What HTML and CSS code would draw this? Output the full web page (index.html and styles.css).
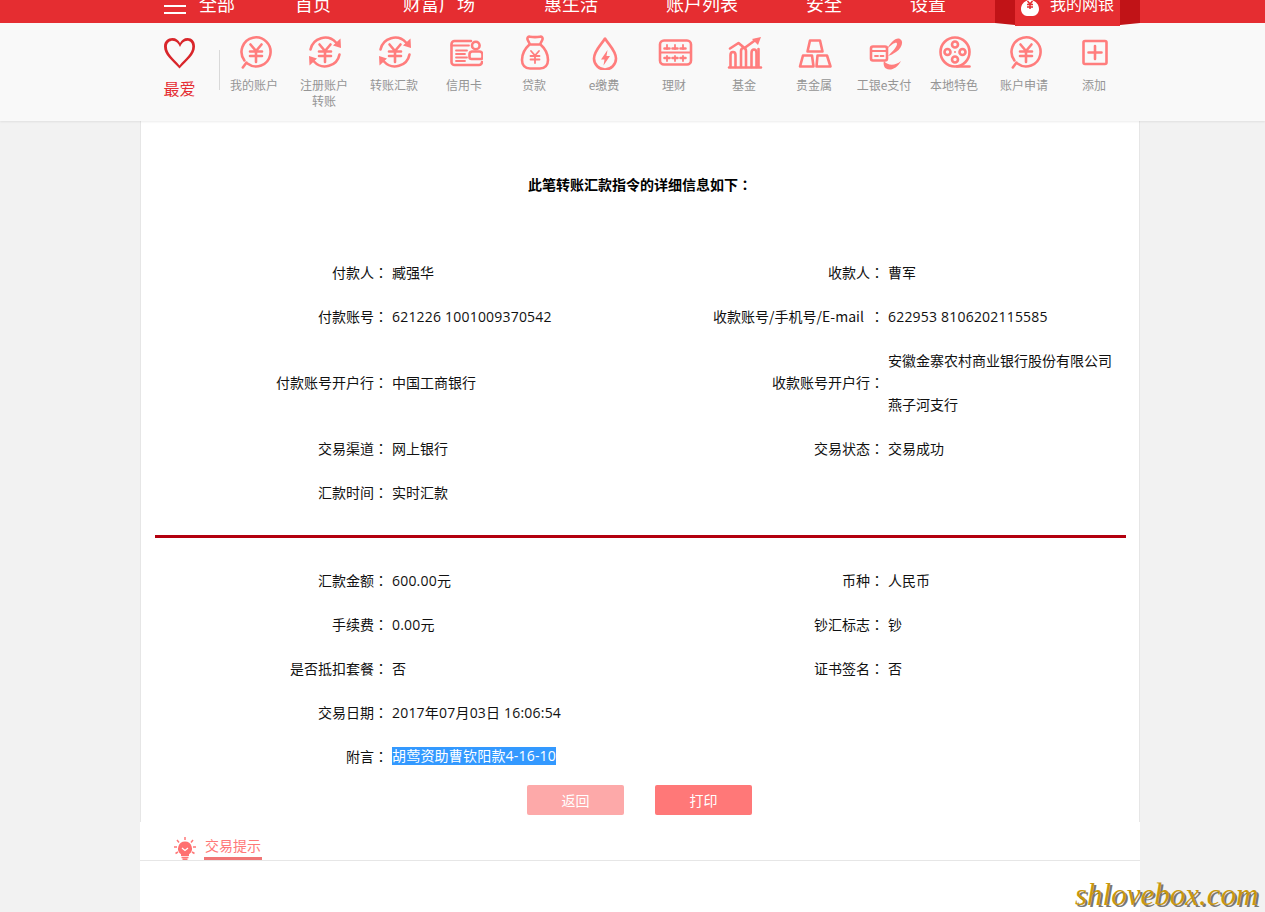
FILE: index.html
```html
<!DOCTYPE html>
<html lang="zh-CN">
<head>
<meta charset="utf-8">
<title>转账汇款详细信息</title>
<link rel="stylesheet" href="styles.css">
</head>
<body>
<svg class="defs" width="0" height="0" aria-hidden="true">
  <symbol id="i-account" viewBox="0 0 36 36"><path d="M10.400 29.500A14.500 14.500 0 1 0 7.400 26.500M9.500 28.500L5.800 33.500"/><path d="M13.500 10.500L19 17l5.500-6.500M13 17.500h12M13 22h12M19 17v11"/></symbol>
  <symbol id="i-transfer" viewBox="0 0 36 36"><path d="M3.500 15.500A14.800 14.800 0 0 1 29 8.500M32.500 20.500A14.800 14.800 0 0 1 7 27.500"/><path class="solid" d="M26 11.500L33.500 4.500l.5 9.500zM10 24.500L2.500 31.500L2 22z"/><path d="M12.500 10.500L18 17l5.500-6.500M12 17.500h12M12 22h12M18 17v11"/></symbol>
  <symbol id="i-card" viewBox="0 0 36 36"><path d="M24 7H7.500a3 3 0 0 0-3 3v18a3 3 0 0 0 3 3H32a3 3 0 0 0 3-3"/><path class="thin" d="M4.500 11.500H22M9 16.500h11M9 20h9M9 23.500h11M9 27h9"/><circle cx="28.800" cy="11.500" r="3.800"/><path d="M25 17.500h7.500a3 3 0 0 1 3 3v2.500a2 2 0 0 1-2 2h-9a2 2 0 0 1-2-2v-2.500a3 3 0 0 1 2.500-3z"/></symbol>
  <symbol id="i-bag" viewBox="0 0 36 36"><path d="M13 10.500L10.500 5.500C10 3.500 11 2.500 13 2.700c3.500.6 6.500.6 10 0 2-.2 3 .8 2.500 2.800L23 10.500M12.500 10.500h11M12.500 10.500C8 14.500 5 20 5 26c0 5 3 8.500 8 8.500h10c5 0 8-3.500 8-8.500 0-6-3-11.500-7.500-15.500"/><path class="thin" d="M14 17l4 4.500 4-4.500M13.500 22h9M13.500 25.500h9M18 21.500v7.500"/></symbol>
  <symbol id="i-drop" viewBox="0 0 36 36"><path d="M18 4.500C14 11 7 17 7 24.500a11 11 0 0 0 22 0C29 17 22 11 18 4.500z"/><path class="solid" d="M20.500 16l-6.500 9.500h3.500l-1 6 6.500-9.500h-3.500z"/></symbol>
  <symbol id="i-abacus" viewBox="0 0 36 36"><rect x="3" y="6.500" width="31" height="24" rx="4"/><path class="thin" d="M3 18.500h31M10 11v4M18 11v4M26 11v4M10 22v5M18 22v5M26 22v5"/><path d="M7.500 14.500h5M15.500 14.500h5M23.500 14.500h5M7.500 24h5M15.500 24h5M23.500 24h5"/></symbol>
  <symbol id="i-fund" viewBox="0 0 36 36"><path d="M3.500 33V21c0-2 1-3 2.500-3s2.500 1 2.500 3v12M14 33V17c0-2 1-3 2.500-3s2.500 1 2.500 3v16M24.500 33V19c0-2.500 1-3.500 2.500-3.500s2.500 1 2.500 3.500v14"/><path d="M2 33.500h32M31.500 33V15M3 14.500L11.500 9l6 5 11-8"/><path class="solid" d="M25 5l9-2-3 8z"/></symbol>
  <symbol id="i-gold" viewBox="0 0 36 36"><path d="M13 6.500h10l2.500 11h-15zM6 21.500h9l1.500 11H3zM20.500 21.500h9.500l3.500 11H19.500z"/></symbol>
  <symbol id="i-epay" viewBox="0 0 36 36"><rect x="4" y="12.500" width="16" height="14" rx="2"/><path class="thin" d="M4 17h16M8 22h3M13.500 22h3"/><path class="solid" d="M20 15C24 8 29 3 33 5c4 2 2 9-4 13-3 2-5 3-8 4 4-4 9-9 9-12 0-2.500-4-1-10 5zM17 27c4 5 11 5 17 0-4 8-11 10-15 7.500-2-1.500-3-4.500-2-7.500z"/></symbol>
  <symbol id="i-reel" viewBox="0 0 36 36"><circle cx="18" cy="18" r="14.500"/><circle cx="18" cy="10.500" r="3"/><circle cx="18" cy="25.500" r="3"/><circle cx="10.500" cy="18" r="3"/><circle cx="25.500" cy="18" r="3"/><circle class="solid" cx="18" cy="18" r="1"/><path d="M20 32.500h12.500"/></symbol>
  <symbol id="i-add" viewBox="0 0 36 36"><rect x="6.500" y="7" width="23" height="23" rx="1.500"/><path d="M18 12v13M11.500 18.500h13"/></symbol>
</svg>

<header class="topbar">
  <nav class="nav">
    <span class="burger"><i></i><i></i></span>
    <a class="nav-item nav-all">全部</a>
    <a class="nav-item nav-home">首页</a>
    <a class="nav-item nav-wealth">财富广场</a>
    <a class="nav-item nav-life">惠生活</a>
    <a class="nav-item">账户列表</a>
    <a class="nav-item">安全</a>
    <a class="nav-item">设置</a>
    <div class="mybank">
      <svg class="bag" viewBox="0 0 20 20"><path d="M7 0h6l-1 4c4 1.500 7 4.500 7 9 0 4-3 7-6 7H7c-3 0-6-3-6-7 0-4.500 3-7.500 7-9z"/><path class="bag-yen" d="M7.500 5l2.500 3 2.500-3M7 8.500h6M7 11h6M10 8v5"/></svg>
      <span>我的网银</span>
    </div>
  </nav>
</header>

<section class="iconbar">
  <div class="fav">
    <svg class="heart" viewBox="0 0 32 31"><path fill-rule="evenodd" d="M15.500 30.500C8 22 0 17 0 8.500 0 3 4 0 8.500 0 12 0 14.500 2 16 5c1.500-3 4-5 7.500-5C28 0 31 3 31 8.500c0 8.500-8 13.500-15.500 22zM15.500 27.500c6-7.500 12.800-11.500 12.800-19 0-3.700-2.300-5.800-5-5.800C20 2.700 17.500 5 16 9 14.500 5 12 2.700 8.500 2.700c-2.700 0-5.600 2.100-5.600 5.800 0 7.500 6.600 11.500 12.600 19z"/></svg>
    <span>最爱</span>
  </div>
  <ul class="shortcuts">
    <li><svg class="ico"><use href="#i-account"/></svg><span>我的账户</span></li>
    <li><svg class="ico"><use href="#i-transfer"/></svg><span>注册账户转账</span></li>
    <li><svg class="ico"><use href="#i-transfer"/></svg><span>转账汇款</span></li>
    <li><svg class="ico"><use href="#i-card"/></svg><span>信用卡</span></li>
    <li><svg class="ico"><use href="#i-bag"/></svg><span>贷款</span></li>
    <li><svg class="ico"><use href="#i-drop"/></svg><span>e缴费</span></li>
    <li><svg class="ico"><use href="#i-abacus"/></svg><span>理财</span></li>
    <li><svg class="ico"><use href="#i-fund"/></svg><span>基金</span></li>
    <li><svg class="ico"><use href="#i-gold"/></svg><span>贵金属</span></li>
    <li><svg class="ico"><use href="#i-epay"/></svg><span>工银e支付</span></li>
    <li><svg class="ico"><use href="#i-reel"/></svg><span>本地特色</span></li>
    <li><svg class="ico"><use href="#i-account"/></svg><span>账户申请</span></li>
    <li><svg class="ico"><use href="#i-add"/></svg><span>添加</span></li>
  </ul>
</section>

<main class="card">
  <h1 class="title">此笔转账汇款指令的详细信息如下<span class="c">：</span></h1>
  <div class="grid">
    <div class="k">付款人<span class="c">：</span></div><div class="v">臧强华</div>
    <div class="k">收款人<span class="c">：</span></div><div class="v">曹军</div>
    <div class="k">付款账号<span class="c">：</span></div><div class="v num">621226 1001009370542</div>
    <div class="k">收款账号/手机号/E-mail <span class="c">：</span></div><div class="v num">622953 8106202115585</div>
    <div class="k tall">付款账号开户行<span class="c">：</span></div><div class="v tall">中国工商银行</div>
    <div class="k tall">收款账号开户行<span class="c">：</span></div><div class="v tall">安徽金寨农村商业银行股份有限公司燕子河支行</div>
    <div class="k">交易渠道<span class="c">：</span></div><div class="v">网上银行</div>
    <div class="k">交易状态<span class="c">：</span></div><div class="v">交易成功</div>
    <div class="k">汇款时间<span class="c">：</span></div><div class="v">实时汇款</div>
  </div>
  <hr class="rule">
  <div class="grid">
    <div class="k">汇款金额<span class="c">：</span></div><div class="v num">600.00元</div>
    <div class="k">币种<span class="c">：</span></div><div class="v">人民币</div>
    <div class="k">手续费<span class="c">：</span></div><div class="v num">0.00元</div>
    <div class="k">钞汇标志<span class="c">：</span></div><div class="v">钞</div>
    <div class="k">是否抵扣套餐<span class="c">：</span></div><div class="v">否</div>
    <div class="k">证书签名<span class="c">：</span></div><div class="v">否</div>
    <div class="k">交易日期<span class="c">：</span></div><div class="v num span3">2017年07月03日 16:06:54</div>
    <div class="k">附言<span class="c">：</span></div><div class="v span3"><span class="selected">胡莺资助曹钦阳款4-16-10</span></div>
  </div>
  <div class="actions">
    <button class="btn btn-back" type="button">返回</button>
    <button class="btn btn-print" type="button">打印</button>
  </div>
</main>

<section class="tips">
  <div class="tips-head">
    <svg class="bulb" viewBox="0 0 24 24"><path class="bulb-rays" d="M12 0v3M4 3l2 2.500M20 3l-2 2.500M1 10h3M20 10h3M2.500 16.500l2.500-1.500M21.500 16.500L19 15"/><path class="bulb-fill" d="M12 4.500a7 7 0 0 0-4 12.700V19h8v-1.800a7 7 0 0 0-4-12.700z"/><path class="bulb-rays" d="M8.500 20.500h7M9.500 22.300h5"/><path class="bulb-mark" d="M9 11l3 2.500 3-2.500"/></svg>
    <span class="tips-label">交易提示</span>
  </div>
</section>

<div class="watermark">shlovebox.com</div>
</body>
</html>
```

FILE: styles.css
```css
* { box-sizing: border-box; }
html, body { margin: 0; padding: 0; height: 912px; overflow: hidden; }
body {
  position: relative;
  background: #f2f2f2;
  color: #111;
  font-family: "Noto Sans CJK SC", "Open Sans", sans-serif;
  font-size: 14px;
}
.defs { position: absolute; }

/* top red bar */
.topbar { height: 23px; background: #e52d31; position: relative; z-index: 2; }
.nav {
  display: flex;
  align-items: flex-start;
  height: 26px;
  padding-left: 164px;
  color: #fff;
  font-size: 18px;
  line-height: 26px;
  position: relative;
  top: -10px;
  width: 1140px;
  white-space: nowrap;
}
.burger { display: block; width: 22px; margin-top: 15px; }
.burger i { display: block; height: 2px; background: #fff; margin-bottom: 5px; }
.nav-item { display: block; margin-left: 68px; }
.nav-all { margin-left: 13px; }
.nav-home { margin-left: 60px; }
.nav-wealth { margin-left: 72px; }
.nav-life { margin-left: 69px; }
.mybank {
  margin-left: auto;
  margin-right: 20px;
  width: 105px;
  height: 36px;
  background: #e52d31;
  display: flex;
  align-items: flex-start;
  font-size: 16px;
  position: relative;
  padding-left: 5px;
}
.mybank::before, .mybank::after {
  content: "";
  position: absolute;
  top: 0;
  bottom: 1px;
  width: 20px;
  background: #c11317;
  clip-path: polygon(0 0, 100% 0, 100% 100%, 0 94%);
}
.mybank::before { left: -20px; }
.mybank::after { right: -20px; transform: scaleX(-1); }
.bag { width: 20px; height: 20px; fill: #fff; margin-right: 10px; margin-top: 6px; }
.bag-yen { fill: none; stroke: #e52d31; stroke-width: 1.500; }

/* icon strip */
.iconbar {
  height: 98px;
  background: #f9f9f9;
  display: flex;
  padding-left: 155px;
  box-shadow: 0 1px 2px rgba(0, 0, 0, .08);
  position: relative;
  z-index: 1;
}
.fav {
  width: 65px;
  display: flex;
  flex-direction: column;
  align-items: center;
  padding-top: 15px;
  padding-right: 16px;
  color: #e52d31;
  font-size: 16px;
  line-height: 24px;
  position: relative;
}
.fav::after {
  content: "";
  position: absolute;
  right: 0;
  top: 27px;
  width: 1px;
  height: 40px;
  background: #d9d9d9;
}
.heart { width: 32px; height: 31px; fill: #d9262b; margin-bottom: 7px; }
.shortcuts { list-style: none; margin: 0; padding: 0; display: flex; }
.shortcuts li {
  width: 70px;
  padding-top: 11px;
  display: flex;
  flex-direction: column;
  align-items: center;
  color: #959595;
  font-size: 12px;
  line-height: 16px;
  text-align: center;
}
.shortcuts span { width: 56px; display: block; margin: 7px 2px 0 0; }
.ico {
  width: 36px;
  height: 36px;
  fill: none;
  stroke: #ff7d7d;
  stroke-width: 2.600;
  stroke-linecap: round;
  stroke-linejoin: round;
}
.thin { stroke-width: 1.800; }
.solid { fill: #ff7d7d; stroke: none; }

/* detail card */
.card {
  width: 1000px;
  height: 701px;
  margin-left: 140px;
  background: #fff;
  border-left: 1px solid #e6e6e6;
  border-right: 1px solid #e6e6e6;
  padding-top: 41px;
}
.title {
  margin: 0 0 44px;
  font-size: 14px;
  font-weight: 700;
  line-height: 44px;
  text-align: center;
  color: #000;
}
.c { font-family: "Noto Sans CJK TC", sans-serif; font-feature-settings: "locl" 0; }
.grid {
  display: grid;
  grid-template-columns: 247px 249px 247px 255px;
  grid-auto-rows: 44px;
  line-height: 44px;
  align-items: center;
}
.k { text-align: right; white-space: nowrap; word-spacing: 3px; }
.v { padding-left: 4px; padding-right: 26px; }
.num { font-family: "Open Sans", "Noto Sans CJK SC", sans-serif; letter-spacing: .2px; padding-top: 2px; }
.tall { grid-row: span 2; }
.span3 { grid-column: 2 / 5; }
.rule {
  height: 3px;
  margin: 21px 13px 20px 14px;
  border: 0;
  background: #b3000f;
}
.selected {
  display: block;
  width: fit-content;
  font-family: "Open Sans", "Noto Sans CJK SC", sans-serif;
  letter-spacing: .2px;
  line-height: 18px;
  background: #3399ff;
  color: #fff;
}
.actions { display: flex; gap: 31px; padding-left: 386px; margin-top: 7px; }
.btn {
  width: 97px;
  height: 30px;
  border: 0;
  border-radius: 2px;
  color: #fff;
  font: inherit;
  padding: 0;
}
.btn-back { background: #fda9a9; }
.btn-print { background: #ff7878; }

/* tips */
.tips { width: 1000px; height: 90px; margin-left: 140px; background: #fff; }
.tips-head {
  height: 39px;
  border-bottom: 1px solid #e6e6e6;
  display: flex;
  padding-left: 33px;
  padding-top: 15px;
}
.bulb { width: 24px; height: 24px; margin-right: 7px; }
.bulb-rays { fill: none; stroke: #ff7878; stroke-width: 1.500; }
.bulb-fill { fill: #ff7070; }
.bulb-mark { fill: none; stroke: #fff; stroke-width: 1.200; }
.tips-label {
  height: 24px;
  width: 58px;
  margin-top: -1px;
  color: #ff7878;
  line-height: 18px;
  text-align: center;
  border-bottom: 3px solid #f07575;
}

/* site watermark, lies over the page */
.watermark {
  position: absolute;
  left: 1075px;
  top: 876px;
  font-family: "Liberation Serif", serif;
  font-style: italic;
  font-size: 31px;
  line-height: 38px;
  color: #c9980e;
  text-shadow: 2px 2px 0 #777;
  white-space: nowrap;
}
```
